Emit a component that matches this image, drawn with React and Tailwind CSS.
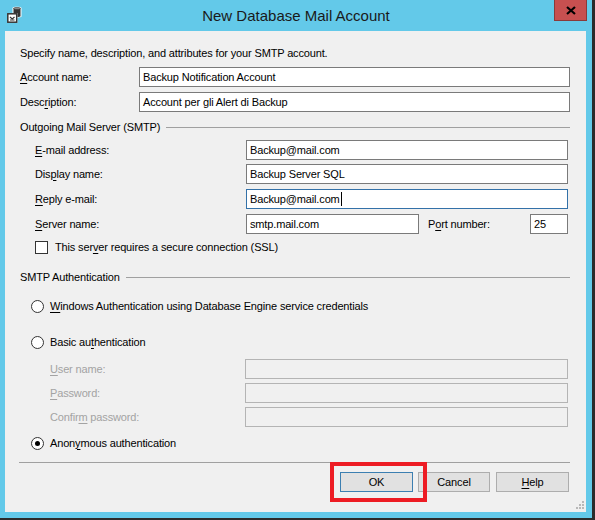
import React from "react";

const U = ({ children }) => <span className="underline underline-offset-2 decoration-1">{children}</span>;

function Input({ value, w, focus, disabled, caret }) {
  return (
    <div
      className={
        "h-[20px] flex items-center px-[3px] border " +
        (disabled ? "bg-[#f0f0f0] border-[#b4b4b4]" : focus ? "bg-white border-[#3371a8]" : "bg-white border-[#7a7a7a]")
      }
      style={{ width: w }}
    >
      <span className="text-black whitespace-nowrap">{value}</span>
      {caret && <span className="inline-block w-px h-[14px] bg-black ml-[1px]" />}
    </div>
  );
}

function Radio({ checked }) {
  return (
    <div className="w-[13px] h-[13px] rounded-full border border-[#333] bg-white flex items-center justify-center">
      {checked && <div className="w-[5px] h-[5px] rounded-full bg-black" />}
    </div>
  );
}

function Header({ children }) {
  return (
    <div className="h-[16px] flex items-center pl-[15px] pr-[16px]">
      <span className="whitespace-nowrap">{children}</span>
      <div className="flex-1 h-px bg-[#a0a0a0] ml-[6px]" />
    </div>
  );
}

function AppIcon() {
  return (
    <svg width="16" height="18" viewBox="0 0 16 18">
      {/* database cylinder */}
      <path d="M5.5 2 C5.5 0.3 14.5 0.3 14.5 2 V10.5 C14.5 12 5.5 12 5.5 10.5 Z" fill="#fff" />
      <path d="M6.5 2.2 C6.5 1 13.5 1 13.5 2.2 V10.3 C13.5 11.3 6.5 11.3 6.5 10.3 Z" fill="#333" />
      <ellipse cx="10" cy="2.4" rx="3" ry="0.9" fill="#8a8a8a" />
      {/* envelope */}
      <rect x="0" y="7" width="10.5" height="10" fill="#fff" />
      <rect x="0.8" y="7.8" width="8.9" height="8.4" fill="#fff" stroke="#333" strokeWidth="1.5" />
      <path d="M3 11 L5.25 13 L7.5 11" fill="none" stroke="#333" strokeWidth="1.2" />
      <path d="M3 14 H7.5" stroke="#333" strokeWidth="1" />
    </svg>
  );
}

export default function App() {
  return (
    <div className="w-[595px] h-[520px] bg-[#2b2b2b] font-['Liberation_Sans',Arial,sans-serif] text-[11px] tracking-[-0.15px] text-black">
      <div className="w-[592px] h-[518px] bg-[#63c9e9] flex flex-col relative">
        {/* Title bar */}
        <div className="h-[31px] flex items-center relative">
          <div className="absolute left-[7px] top-[6px]">
            <AppIcon />
          </div>
          <div className="flex-1 text-center text-[15px] tracking-normal text-[#1a1a1a] pt-[1px]">New Database Mail Account</div>
          <div className="absolute top-0 right-[5px] w-[33px] h-[21px] bg-[#c75050] border border-[#8a3a3a] border-t-0 flex items-center justify-center">
            <svg width="10" height="9" viewBox="0 0 10 9">
              <path d="M1 1 L9 8 M9 1 L1 8" stroke="#000" strokeWidth="2.2" />
            </svg>
          </div>
        </div>

        {/* Client area */}
        <div className="ml-[5px] mr-[6px] h-[481px] bg-[#f0f0f0] relative flex flex-col">
          <div className="h-[16px] mt-[14px] pl-[15px] flex items-center">
            Specify name, description, and attributes for your SMTP account.
          </div>

          <div className="mt-[6px] flex items-center pl-[15px]">
            <div className="w-[119px]"><U>A</U>ccount name:</div>
            <Input value="Backup Notification Account" w={431} />
          </div>
          <div className="mt-[5px] flex items-center pl-[15px]">
            <div className="w-[119px]">Desc<U>r</U>iption:</div>
            <Input value="Account per gli Alert di Backup" w={431} />
          </div>

          <div className="mt-[7px]">
            <Header>Outgoing Mail Server (SMTP)</Header>
          </div>

          <div className="mt-[5px] flex items-center pl-[30px]">
            <div className="w-[211px]"><U>E</U>-mail address:</div>
            <Input value="Backup@mail.com" w={322} />
          </div>
          <div className="mt-[4px] flex items-center pl-[30px]">
            <div className="w-[211px]">Dis<U>p</U>lay name:</div>
            <Input value="Backup Server SQL" w={322} />
          </div>
          <div className="mt-[5px] flex items-center pl-[30px]">
            <div className="w-[211px]"><U>R</U>eply e-mail:</div>
            <Input value="Backup@mail.com" w={322} focus caret />
          </div>
          <div className="mt-[5px] flex items-center pl-[30px]">
            <div className="w-[211px]"><U>S</U>erver name:</div>
            <Input value="smtp.mail.com" w={173} />
            <div className="ml-[9px] w-[102px]">P<U>o</U>rt number:</div>
            <Input value="25" w={38} />
          </div>

          <div className="mt-[5px] h-[16px] flex items-center pl-[30px]">
            <div className="w-[13px] h-[13px] border border-[#333] bg-white" />
            <div className="ml-[7px]">This ser<U>v</U>er requires a secure connection (SSL)</div>
          </div>

          <div className="mt-[14px]">
            <Header>SMTP Authentication</Header>
          </div>

          <div className="mt-[13px] h-[16px] flex items-center pl-[26px]">
            <Radio />
            <div className="ml-[6px]"><U>W</U>indows Authentication using Database Engine service credentials</div>
          </div>

          <div className="mt-[20px] h-[16px] flex items-center pl-[26px]">
            <Radio />
            <div className="ml-[6px]">Basic au<U>t</U>hentication</div>
          </div>

          <div className="mt-[9px] flex items-center pl-[45px] text-[#a3a3a3]">
            <div className="w-[195px]"><U>U</U>ser name:</div>
            <Input w={323} disabled />
          </div>
          <div className="mt-[4px] flex items-center pl-[45px] text-[#a3a3a3]">
            <div className="w-[195px]"><U>P</U>assword:</div>
            <Input w={323} disabled />
          </div>
          <div className="mt-[4px] flex items-center pl-[45px] text-[#a3a3a3]">
            <div className="w-[195px]">Confir<U>m</U> password:</div>
            <Input w={323} disabled />
          </div>

          <div className="mt-[8px] h-[16px] flex items-center pl-[26px]">
            <Radio checked />
            <div className="ml-[6px]">Anon<U>y</U>mous authentication</div>
          </div>

          <div className="mt-[11px] ml-[14px] mr-[16px] h-px bg-[#a0a0a0]" />

          <div className="mt-[9px] flex items-center justify-end pr-[17px] gap-[5px]">
            <button className="w-[73px] h-[20px] bg-[#e1e1e1] border border-[#3c7fb1] flex items-center justify-center">OK</button>
            <button className="w-[72px] h-[20px] bg-[#e1e1e1] border border-[#adadad] flex items-center justify-center mr-[1px]">Cancel</button>
            <button className="w-[73px] h-[20px] bg-[#e1e1e1] border border-[#adadad] flex items-center justify-center"><U>H</U>elp</button>
          </div>

          {/* highlight box */}
          <div className="absolute left-[325px] top-[431px] w-[97px] h-[40px] border-[4px] border-[#ed1c24]" />

          {/* resize grip */}
          <svg className="absolute right-[1px] bottom-[2px]" width="9" height="9" viewBox="0 0 9 9">
            <rect x="6" y="0" width="2" height="2" fill="#b8b8b8" />
            <rect x="3" y="3" width="2" height="2" fill="#b8b8b8" />
            <rect x="6" y="3" width="2" height="2" fill="#b8b8b8" />
            <rect x="0" y="6" width="2" height="2" fill="#b8b8b8" />
            <rect x="3" y="6" width="2" height="2" fill="#b8b8b8" />
            <rect x="6" y="6" width="2" height="2" fill="#b8b8b8" />
          </svg>
        </div>
      </div>
    </div>
  );
}
